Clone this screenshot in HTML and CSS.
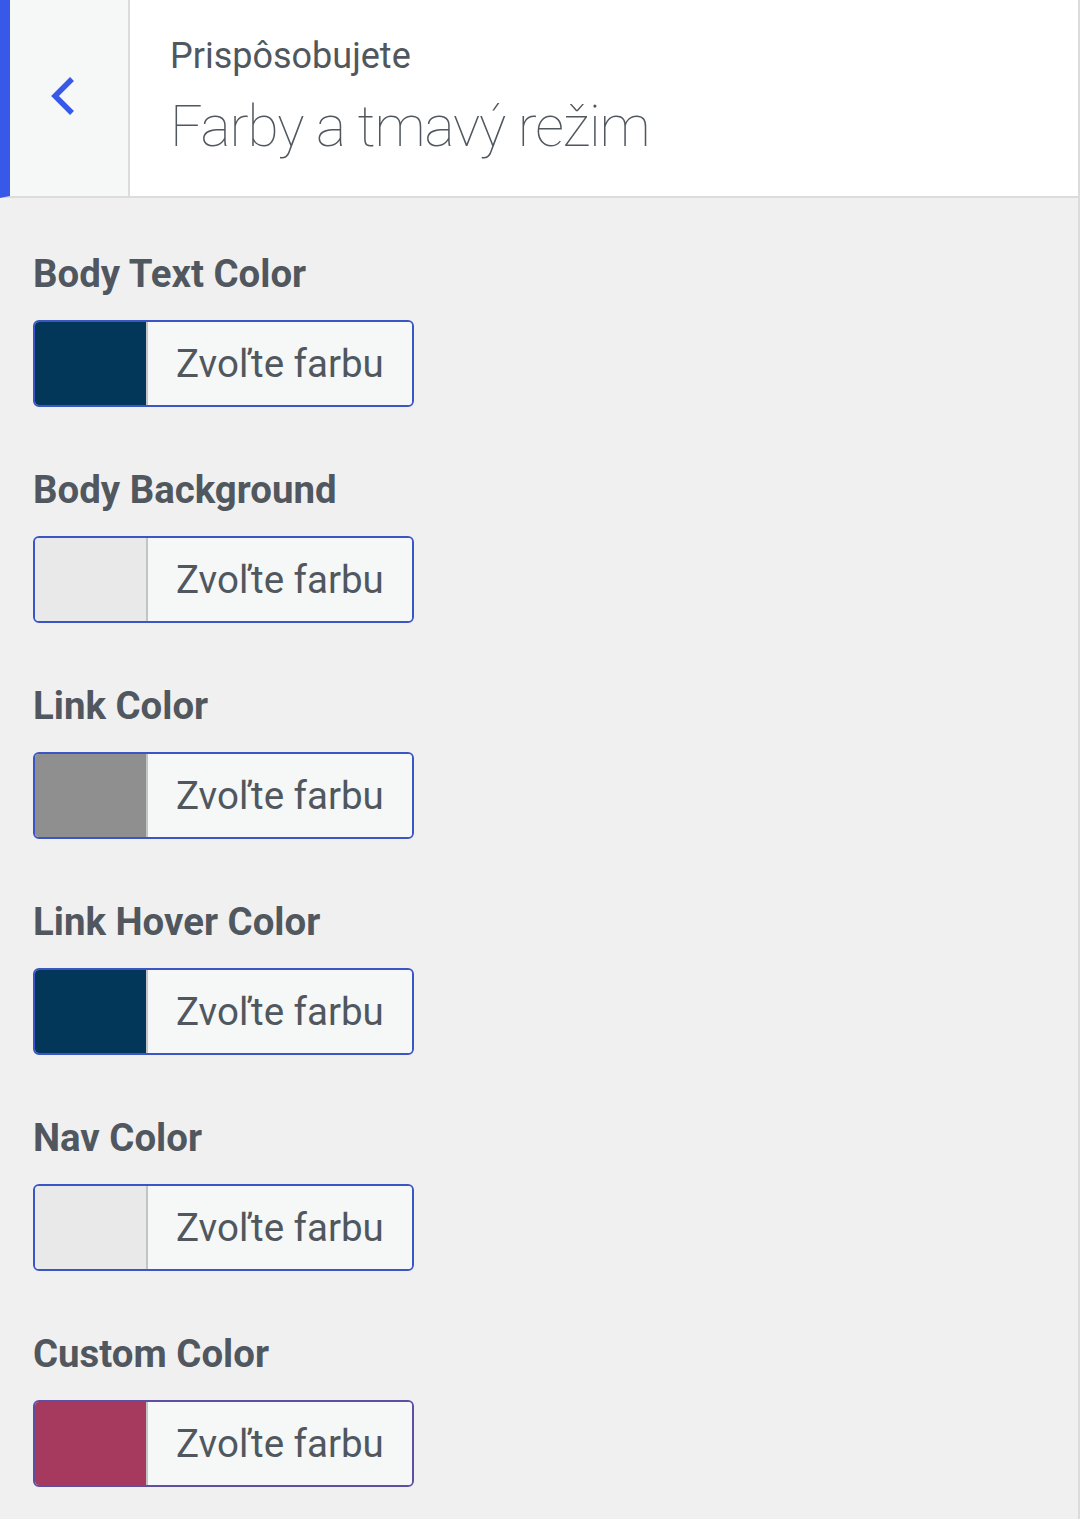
FILE: index.html
```html
<!DOCTYPE html>
<html lang="sk">
<head>
<meta charset="utf-8">
<title>Farby a tmavý režim</title>
<link rel="stylesheet" href="styles.css">
</head>
<body>
<div class="panel">
  <header class="header">
    <button class="back" aria-label="Späť">
      <svg width="30" height="44" viewBox="0 0 30 44"><path d="M25 5 L8 22 L25 39" fill="none" stroke="#3858e9" stroke-width="5.5" stroke-linecap="butt" stroke-linejoin="miter"/></svg>
    </button>
    <div class="title-wrap">
      <div class="subtitle">Prispôsobujete</div>
      <h1 class="title">Farby a tmavý režim</h1>
    </div>
  </header>
  <main class="controls">
    <section class="control">
      <div class="label">Body Text Color</div>
      <button class="picker"><span class="swatch navy"></span><span class="picker-text">Zvoľte farbu</span></button>
    </section>
    <section class="control">
      <div class="label">Body Background</div>
      <button class="picker"><span class="swatch light"></span><span class="picker-text">Zvoľte farbu</span></button>
    </section>
    <section class="control">
      <div class="label">Link Color</div>
      <button class="picker"><span class="swatch gray"></span><span class="picker-text">Zvoľte farbu</span></button>
    </section>
    <section class="control">
      <div class="label">Link Hover Color</div>
      <button class="picker"><span class="swatch navy"></span><span class="picker-text">Zvoľte farbu</span></button>
    </section>
    <section class="control">
      <div class="label">Nav Color</div>
      <button class="picker"><span class="swatch light"></span><span class="picker-text">Zvoľte farbu</span></button>
    </section>
    <section class="control">
      <div class="label">Custom Color</div>
      <button class="picker picker-custom"><span class="swatch red"></span><span class="picker-text">Zvoľte farbu</span></button>
    </section>
  </main>
</div>
</body>
</html>
```

FILE: styles.css
```css
html, body {
  margin: 0;
  padding: 0;
}
body {
  background: #f0f0f1;
  font-family: Roboto, "Noto Sans", "Liberation Sans", sans-serif;
  color: #50575e;
}
.panel {
  min-height: 1519px;
  border-right: 2px solid #dcdcde;
  box-sizing: border-box;
}
.header {
  display: flex;
  height: 198px;
  box-sizing: border-box;
  background: #fff;
  border-left: 10px solid #3858e9;
  border-bottom: 2px solid #dcdcde;
}
.back {
  width: 120px;
  flex: none;
  background: #f6f7f7;
  border: none;
  border-right: 2px solid #dcdcde;
  padding: 0 0 5px 37px;
  margin: 0;
  display: flex;
  align-items: center;
  justify-content: flex-start;
}
.back svg {
  display: block;
}
.title-wrap {
  padding: 36px 0 0 40px;
  display: flex;
  flex-direction: column;
}
.subtitle {
  font-size: 36px;
  line-height: 40px;
  font-weight: 400;
  color: #50575e;
}
.title {
  margin: 17px 0 0;
  font-size: 57px;
  line-height: 68px;
  font-weight: 100;
  letter-spacing: -1.1px;
  color: #50575e;
}
.controls {
  padding: 54px 0 0 33px;
}
.control {
  display: flex;
  flex-direction: column;
  align-items: flex-start;
  height: 216px;
}
.label {
  font-size: 38.4px;
  line-height: 44px;
  font-weight: 700;
  color: #50575e;
  margin-bottom: 24px;
}
.picker {
  display: flex;
  width: 381px;
  height: 87px;
  box-sizing: border-box;
  border: 2px solid #3a56c4;
  border-radius: 6px;
  overflow: hidden;
  padding: 0;
  margin: 0;
  background: #f6f7f7;
  font-family: inherit;
  cursor: pointer;
}
.picker-custom {
  border-color: #5e4fa4;
}
.swatch {
  width: 111px;
  flex: none;
  border-right: 2px solid #c3c4c7;
}
.navy { background: #02375a; }
.light { background: #e9e9ea; }
.gray { background: #8f8f8f; }
.red { background: #a63a5e; }
.picker-text {
  flex: 1;
  padding-left: 28px;
  font-size: 38.5px;
  line-height: 83px;
  text-align: left;
  color: #50575e;
  background: #f6f7f7;
}
```
